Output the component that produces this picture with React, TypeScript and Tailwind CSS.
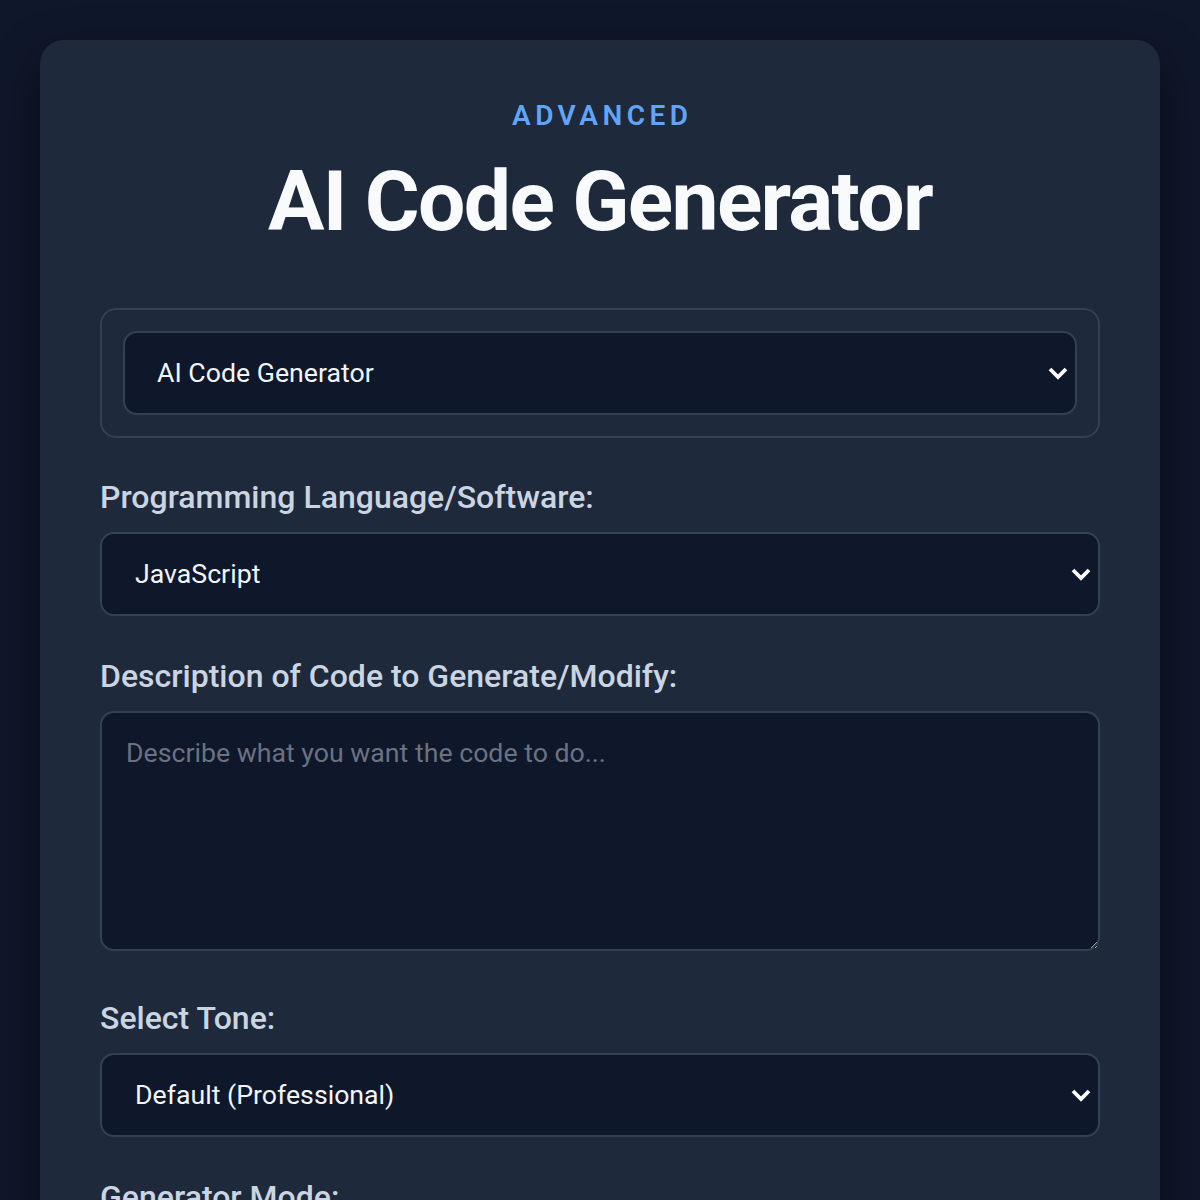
import React from "react";

const Chevron = () => (
  <svg width="22" height="16" viewBox="0 0 22 16" fill="none" className="pointer-events-none absolute top-1/2 -translate-y-1/2 right-[6px]">
    <path d="M3 4l8 8 8-8" stroke="#ffffff" strokeWidth="3.8" strokeLinecap="butt" strokeLinejoin="miter" />
  </svg>
);

const SelectBox = ({ value, className = "" }: { value: string; className?: string }) => (
  <div className={`relative h-[84px] rounded-[14px] border-2 border-[#334155] bg-[#0f172a] flex items-center ${className}`}>
    <span className="text-[26.7px] text-[#f1f5f9]">{value}</span>
    <Chevron />
  </div>
);

const Field = ({ label, children }: { label: string; children: React.ReactNode }) => (
  <div className="flex flex-col gap-[16px]">
    <label className="text-[32px] leading-[38px] font-medium text-[#cbd5e1]">{label}</label>
    {children}
  </div>
);

export default function App() {
  return (
    <div className="min-h-[1200px] bg-[#0f172a] pt-[40px] px-[40px] font-['Roboto',sans-serif]">
      <div className="rounded-[24px] bg-[#1e293b] px-[60px] pt-[60px] pb-[60px] shadow-[0_20px_50px_rgba(0,0,0,0.45)]">
        <div className="flex flex-col items-center">
          <div className="text-[28px] leading-[32px] font-semibold tracking-[0.16em] pl-[0.16em] text-[#60a5fa]">ADVANCED</div>
          <h1 className="mt-[20px] text-[84px] leading-[100px] font-bold tracking-[-0.02em] text-[#f8fafc]">AI Code Generator</h1>
        </div>

        <div className="mt-[56px] rounded-[16px] border-2 border-[#334155] p-[21px]">
          <SelectBox value="AI Code Generator" className="pl-[32px]" />
        </div>

        <div className="mt-[40px] flex flex-col gap-[41px]">
          <Field label="Programming Language/Software:">
            <SelectBox value="JavaScript" className="pl-[33px]" />
          </Field>
          <Field label="Description of Code to Generate/Modify:">
            <div className="pb-[7px]">
              <textarea
                placeholder="Describe what you want the code to do..."
                className="block w-full h-[240px] rounded-[14px] border-2 border-[#334155] bg-[#0f172a] px-[24px] pt-[20px] pb-[22px] text-[26.7px] text-[#f1f5f9] placeholder:text-[#6b7280] outline-none"
              />
            </div>
          </Field>
          <Field label="Select Tone:">
            <SelectBox value="Default (Professional)" className="pl-[33px]" />
          </Field>
          <Field label="Generator Mode:">
            <SelectBox value="Normal" className="pl-[33px]" />
          </Field>
        </div>
      </div>
    </div>
  );
}
